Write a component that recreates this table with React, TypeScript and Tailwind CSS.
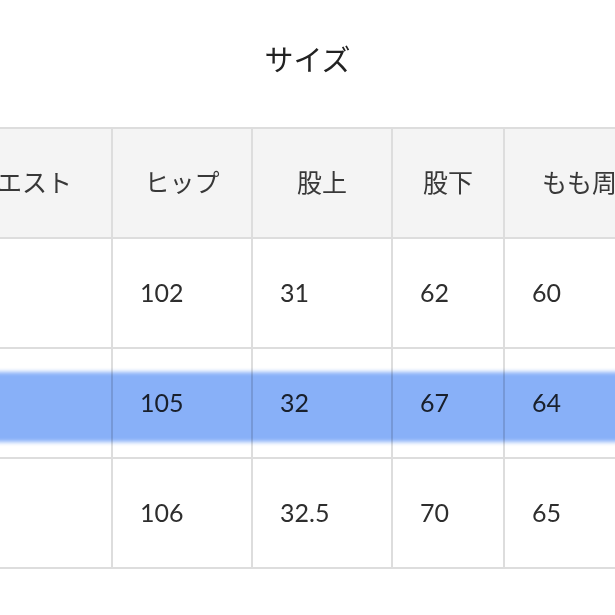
const headers = ["ウエスト", "ヒップ", "股上", "股下", "もも周り"];
const widths = ["w-[180px]", "w-[140px]", "w-[140px]", "w-[112px]", "w-[176px]"];

const rows = [
  ["", "102", "31", "62", "60"],
  ["", "105", "32", "67", "64"],
  ["", "106", "32.5", "70", "65"],
];

export default function App() {
  return (
    <div className="w-[615px] h-[615px] overflow-hidden bg-white font-['Lato','Noto_Sans_CJK_JP',sans-serif] text-[#2e2e2e]">
      {/* title */}
      <div className="h-[127px] pt-[40px] text-center text-[29px] leading-[40px] text-[#222]">
        サイズ
      </div>

      {/* size table */}
      <div className="relative ml-[-69px] w-max">
        <table className="border-collapse text-[25px]">
          <thead>
            <tr className="h-[110px] bg-[#f4f4f4]">
              {headers.map((h, i) => (
                <th
                  key={h}
                  className={`${widths[i]} border-2 border-[#dddddd] text-center font-normal text-[#383838]`}
                >
                  {h}
                </th>
              ))}
            </tr>
          </thead>
          <tbody>
            {rows.map((r, ri) => (
              <tr key={ri} className="h-[110px]">
                {r.map((c, ci) => (
                  <td
                    key={ci}
                    className="border-2 border-[#dddddd] pl-[27px] text-left align-middle"
                  >
                    {c}
                  </td>
                ))}
              </tr>
            ))}
          </tbody>
        </table>

        {/* highlighter band over the 2nd row */}
        <div className="pointer-events-none absolute left-0 right-0 top-[245px] h-[70px] bg-[#88b0f8] mix-blend-multiply blur-[2px]" />
      </div>
    </div>
  );
}
